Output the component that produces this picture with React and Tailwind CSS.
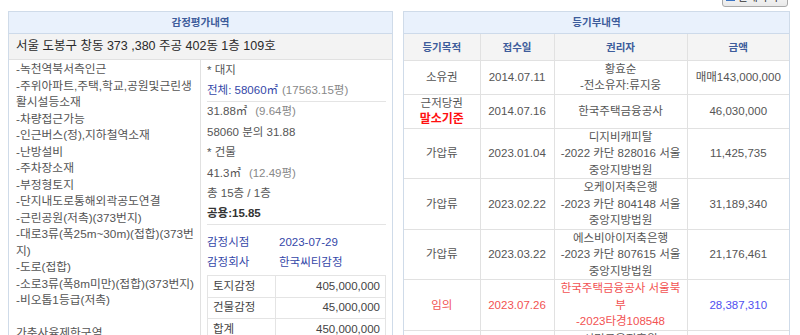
import React from 'react';

const font = { fontFamily: '"Liberation Sans", "Noto Sans CJK KR", sans-serif' };

const features = [
  '-녹천역북서측인근',
  '-주위아파트,주택,학교,공원및근린생',
  '활시설등소재',
  '-차량접근가능',
  '-인근버스(정),지하철역소재',
  '-난방설비',
  '-주차장소재',
  '-부정형토지',
  '-단지내도로통해외곽공도연결',
  '-근린공원(저촉)(373번지)',
  '-대로3류(폭25m~30m)(접합)(373번',
  '지)',
  '-도로(접합)',
  '-소로3류(폭8m미만)(접합)(373번지)',
  '-비오톱1등급(저촉)',
  '\u00a0',
  '가축사육제한구역',
];

const records = [
  { kind: ['소유권'], date: '2014.07.11', holder: ['황효순', '-전소유자:류지웅'], amount: '매매143,000,000' },
  { kind: ['근저당권'], base: true, date: '2014.07.16', holder: ['한국주택금융공사'], amount: '46,030,000' },
  { kind: ['가압류'], date: '2023.01.04', holder: ['디지비캐피탈', '-2022 카단 828016 서울', '중앙지방법원'], amount: '11,425,735' },
  { kind: ['가압류'], date: '2023.02.22', holder: ['오케이저축은행', '-2023 카단 804148 서울', '중앙지방법원'], amount: '31,189,340' },
  { kind: ['가압류'], date: '2023.03.22', holder: ['에스비아이저축은행', '-2023 카단 807615 서울', '중앙지방법원'], amount: '21,176,461' },
  { kind: ['임의'], red: true, date: '2023.07.26', holder: ['한국주택금융공사 서울북', '부', '-2023타경108548'], amount: '28,387,310' },
  { kind: ['가압류'], date: '2023.08.02', holder: ['서민금융진흥원', '-2023 카단 000000', '서울북부지방법원'], amount: '5,000,000' },
];

const AppraisalPanel = () => (
  <div className="w-[385px] border border-[#cfdbe9] bg-white">
    <div className="h-[22px] flex items-center justify-center bg-[#e9f1fc] border-b border-[#cddaea] text-[10.5px] font-bold text-[#3d5c9b]">
      감정평가내역
    </div>
    <div className="h-[26px] flex items-center pl-[7px] bg-[#f3f3f3] border-b border-[#e1e1e1] text-[12.5px] text-[#2a2a2a]">
      서울 도봉구 창동 373 ,380 주공 402동 1층 109호
    </div>
    <div className="flex">
      {/* Features */}
      <div className="w-[192px] shrink-0 border-r border-[#e1e1e1] pl-[7px] pt-px text-[11.75px] leading-[16.5px] text-[#555] whitespace-nowrap">
        {features.map((line, i) => (
          <div key={i}>{line}</div>
        ))}
      </div>

      {/* Land / building summary */}
      <div className="flex-1 px-[6px] text-[11.5px] text-[#555]">
        <div className="h-[20.5px] flex items-center">* 대지</div>
        <div className="h-[21px] flex items-center border-b border-[#e4e4e4]">
          <span className="text-[#3447a8]">전체: 58060㎡</span>
          <span className="ml-[4px] text-[#888]">(17563.15평)</span>
        </div>
        <div className="h-[20.5px] flex items-center">
          31.88㎡<span className="ml-[8px] text-[#888]">(9.64평)</span>
        </div>
        <div className="h-[20.5px] flex items-center">58060 분의 31.88</div>
        <div className="h-[20.5px] flex items-center">* 건물</div>
        <div className="h-[20.5px] flex items-center">
          41.3㎡<span className="ml-[8px] text-[#888]">(12.49평)</span>
        </div>
        <div className="h-[20.5px] flex items-center">총 15층 / 1층</div>
        <div className="h-[21px] flex items-center border-b border-[#e4e4e4] font-bold text-[#333]">공용:15.85</div>

        <div className="mt-[7px] grid grid-cols-[72px_1fr] text-[#3447a8]">
          <div className="h-[20.5px] flex items-center">감정시점</div>
          <div className="h-[20.5px] flex items-center">2023-07-29</div>
          <div className="h-[20.5px] flex items-center">감정회사</div>
          <div className="h-[20.5px] flex items-center">한국씨티감정</div>
        </div>

        <div className="mt-[2px] grid grid-cols-[68px_1fr] border-t border-l border-[#e4e4e4] text-[#444]">
          {[
            ['토지감정', '405,000,000'],
            ['건물감정', '45,000,000'],
            ['합계', '450,000,000'],
          ].map(([k, v]) => (
            <React.Fragment key={k}>
              <div className="h-[21.5px] flex items-center pl-[5px] border-r border-b border-[#e4e4e4]">{k}</div>
              <div className="h-[21.5px] flex items-center justify-end pr-[5px] border-r border-b border-[#e4e4e4]">{v}</div>
            </React.Fragment>
          ))}
        </div>
      </div>
    </div>
  </div>
);

const RegistryPanel = () => (
  <div className="w-[387px] border border-[#cfdbe9] bg-white">
    <div className="h-[22px] flex items-center justify-center bg-[#e9f1fc] border-b border-[#cddaea] text-[10.5px] font-bold text-[#3d5c9b]">
      등기부내역
    </div>
    <table className="w-full table-fixed border-collapse text-[11.5px] leading-[16.5px] text-[#555]">
      <colgroup>
        <col className="w-[76px]" />
        <col className="w-[74px]" />
        <col className="w-[133px]" />
        <col />
      </colgroup>
      <thead>
        <tr className="h-[26px] bg-[#f4f4f4] text-[#3d5c9b] font-bold text-[10.5px]">
          {['등기목적', '접수일', '권리자', '금액'].map((h, i) => (
            <th key={h} className={`p-0 text-center border-b border-[#e1e1e1] ${i < 3 ? 'border-r' : ''}`}>
              {h}
            </th>
          ))}
        </tr>
      </thead>
      <tbody>
        {records.map((r, i) => (
          <tr key={i} className={r.red ? 'text-[#f25252]' : ''}>
            <td className="p-0 text-center align-middle border-r border-b border-[#e1e1e1]">
              {r.kind.map((k) => (
                <div key={k}>{k}</div>
              ))}
              {r.base && <div className="font-bold text-[#ff1010] text-[12px]">말소기준</div>}
            </td>
            <td className="p-0 text-center align-middle border-r border-b border-[#e1e1e1]">{r.date}</td>
            <td className="p-0 text-center align-middle border-r border-b border-[#e1e1e1] whitespace-nowrap">
              {r.holder.map((h, j) => (
                <div key={j}>{h}</div>
              ))}
            </td>
            <td className={`p-0 text-center align-middle border-b border-[#e1e1e1] ${r.red ? 'text-[#5050f0]' : ''}`}>
              {r.amount}
            </td>
          </tr>
        ))}
      </tbody>
    </table>
  </div>
);

export default function App() {
  return (
    <div className="w-[800px] h-[335px] overflow-hidden bg-white" style={font}>
      <div className="flex justify-end pr-[12px] h-[7px]">
        <button className="-mt-[13px] h-[20px] flex items-center gap-[3px] px-[3px] border border-[#a9a9a9] rounded-[3px] bg-gradient-to-b from-white to-[#e9e9e9] text-[11px] text-[#333]">
          <span className="w-[9px] h-[8px] border border-[#3b74c4] bg-[#cfe0f5]" />
          <span className="pr-[6px]">인쇄하기</span>
        </button>
      </div>
      <div className="flex gap-[10px] pl-[8px] pt-[4px]">
        <AppraisalPanel />
        <RegistryPanel />
      </div>
    </div>
  );
}
